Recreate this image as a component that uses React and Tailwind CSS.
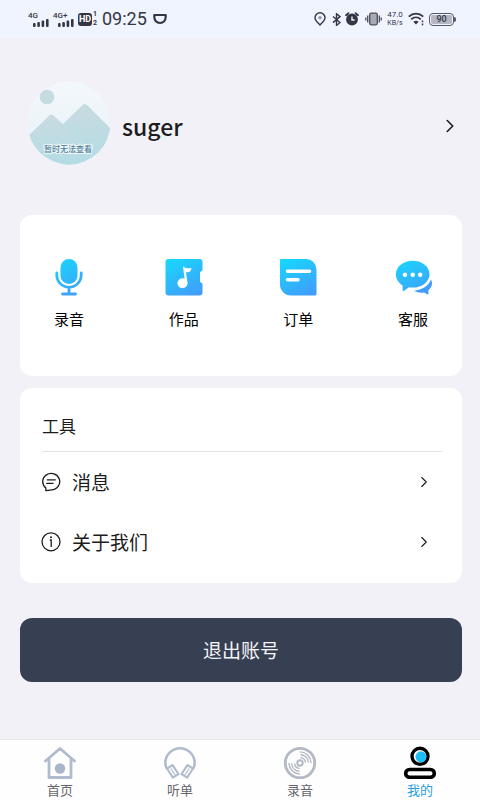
import { useState } from 'react'
import { ChevronRight } from 'lucide-react'

// --- STATUS BAR ICONS ---
const SignalIcon = ({ label, plus }) => (
  <span className="relative block w-[21px] h-4">
    <span className="absolute left-0 top-0 text-[8px] leading-[9px] font-medium">{label}{plus && '+'}</span>
    <svg className="absolute right-0 bottom-0" width="16" height="8" viewBox="0 0 16 8" fill="currentColor">
      <rect x="0" y="4" width="2.6" height="4" rx="1" />
      <rect x="4.3" y="3" width="2.6" height="5" rx="1" />
      <rect x="8.6" y="1.5" width="2.6" height="6.5" rx="1" />
      <rect x="13" y="0" width="2.6" height="8" rx="1" />
    </svg>
  </span>
)

const PinIcon = () => (
  <svg width="12" height="14" viewBox="0 0 12 14" fill="none" stroke="currentColor" strokeWidth="1.4">
    <path d="M6 13C4 11 1 8.6 1 5.8a5 5 0 0 1 10 0C11 8.6 8 11 6 13z" />
    <circle cx="6" cy="5.8" r="1.8" fill="#9a9ca8" stroke="none" />
  </svg>
)

const BluetoothIcon = () => (
  <svg width="9" height="13" viewBox="0 0 9 13" fill="none" stroke="currentColor" strokeWidth="1.4">
    <path d="M1 3.5l7 6-3.5 3V.7L8 3.6l-7 6" />
  </svg>
)

const AlarmIcon = () => (
  <svg width="14" height="14" viewBox="0 0 14 14" fill="none" stroke="currentColor">
    <circle cx="7" cy="7.5" r="5.9" fill="currentColor" stroke="none" />
    <path d="M1 3.2l2.4-2M13 3.2l-2.4-2" strokeWidth="1.8" strokeLinecap="round" />
    <path d="M7 4.5V8h2.6" stroke="#f0f2fd" strokeWidth="1.4" />
  </svg>
)

const VibrateIcon = () => (
  <svg width="17" height="14" viewBox="0 0 17 14" fill="none" stroke="#4b4d5b" strokeWidth="1.3">
    <rect x="4.7" y="1.2" width="7.6" height="11.6" rx="1.5" fill="#a7a9b4" />
    <path d="M2.7 3.5v7M14.3 3.5v7M.8 5.5v3M16.2 5.5v3" />
  </svg>
)

const WifiIcon = () => (
  <svg width="17" height="14" viewBox="0 0 17 14" fill="none" stroke="currentColor" strokeWidth="1.7">
    <path d="M.8 4.6c4.2-4 10.2-4 14.4 0M3.2 7.3c2.8-2.7 6.8-2.7 9.6 0" />
    <path d="M5.4 9.8a3.9 3.9 0 0 1 5.2 0L8 12.6z" fill="currentColor" stroke="none" />
    <path d="M14.5 8.5v1.8M14.5 11.5v1.8" strokeWidth="1.5" />
  </svg>
)

const Battery = () => (
  <span className="flex items-center">
    <span className="flex items-center justify-center w-[25px] h-[13px] rounded border border-[#55586a] p-px">
      <span className="w-full h-full rounded-[2px] bg-[#b4b6c3] text-[9px] leading-[9px] font-medium text-center">90</span>
    </span>
    <span className="w-[2px] h-[5px] rounded-r bg-[#55586a]" />
  </span>
)

// --- PROFILE ---
const Avatar = () => (
  <svg className="w-[84px] h-[84px] shrink-0" viewBox="0 0 84 84">
    <defs>
      <clipPath id="avatarClip"><circle cx="42" cy="42" r="41.5" /></clipPath>
      <linearGradient id="sky" x1="0" y1="0" x2="0" y2="1">
        <stop offset="0" stopColor="#f4f8fc" />
        <stop offset="1" stopColor="#e4f1f7" />
      </linearGradient>
      <linearGradient id="hill" x1="0" y1="0" x2="0" y2="1">
        <stop offset="0" stopColor="#c9dbe0" />
        <stop offset="1" stopColor="#b2dce5" />
      </linearGradient>
    </defs>
    <g clipPath="url(#avatarClip)">
      <rect width="84" height="84" fill="url(#sky)" />
      <circle cx="20" cy="16" r="7.3" fill="#c5dbe2" />
      <path d="M34 45L55 24.5c2-2 3.500-2 5.500 0L84 48v36H34z" fill="url(#hill)" />
      <path d="M0 56L22 35c2-2 3-2 5 0l31 28v22H0z" fill="url(#hill)" />
    </g>
    <text x="41" y="71" textAnchor="middle" fontSize="8" fontWeight="500" fill="#4f8298" stroke="#edf7fa" strokeWidth="2" paintOrder="stroke">
      暂时无法查看
    </text>
  </svg>
)

// --- SHORTCUT ICONS ---
const BlueGradient = ({ id }) => (
  <defs>
    <linearGradient id={id} gradientUnits="userSpaceOnUse" x1="10" y1="0" x2="28" y2="38">
      <stop offset="0" stopColor="#18d6fc" />
      <stop offset="1" stopColor="#419dfb" />
    </linearGradient>
  </defs>
)

const MicIcon = () => (
  <svg width="38" height="38" viewBox="0 0 38 38">
    <BlueGradient id="mic" />
    <rect x="10.5" y="1" width="17" height="25" rx="8.5" fill="url(#mic)" />
    <path d="M6.8 15v2a12.2 12.2 0 0 0 24.4 0v-2M19 29.5v6M12.5 36h13" fill="none" stroke="url(#mic)" strokeWidth="2.8" strokeLinecap="round" />
  </svg>
)

const WorksIcon = () => (
  <svg width="38" height="38" viewBox="0 0 38 38">
    <BlueGradient id="works" />
    <path d="M3.5 1h31A3 3 0 0 1 37.5 4v8c0 1.500-2.500 1-2.500 3v8c0 2 2.500 1.500 2.500 3v8.500a3 3 0 0 1-3 3h-31a3 3 0 0 1-3-3V4a3 3 0 0 1 3-3z" fill="url(#works)" />
    <circle cx="17.5" cy="25.2" r="5" fill="#fff" />
    <path d="M18 8.5c3 2 5.500 2.200 8.500 1.500-.4 3.500-2.500 4.800-5.500 4L22.500 25.500h-2.300z" fill="#fff" />
  </svg>
)

const OrderIcon = () => (
  <svg width="38" height="38" viewBox="0 0 38 38">
    <BlueGradient id="order" />
    <path d="M2 1h25a10.5 10.5 0 0 1 10.5 10.5V36a1.5 1.5 0 0 1-1.5 1.5H12A11 11 0 0 1 1 26.500V2a1 1 0 0 1 1-1z" fill="url(#order)" />
    <path d="M8.5 13.2h22M8.5 21.8h10.5" stroke="#fff" strokeWidth="3.6" strokeLinecap="round" />
  </svg>
)

const ServiceIcon = () => (
  <svg width="38" height="38" viewBox="0 0 38 38">
    <BlueGradient id="service" />
    <path d="M37 21.5c2 3.8 1 8-2.7 10.9l.2 3.2c0 .7-.6 1-1.2.7l-3.3-1.9c-3.500.6-7 .1-10-1.700C28 32 34.500 28 37 21.500z" fill="#419dfb" />
    <path d="M18.7 2.8c9.3 0 16.8 5.9 16.8 13.4s-7.5 13.4-16.8 13.4c-1.3 0-2.5-.1-3.7-.3L9.8 33c-.7.4-1.2 0-1.2-.7v-4.8C4.6 25 1.9 20.9 1.9 16.2c0-7.5 7.5-13.4 16.8-13.4z" fill="url(#service)" />
    <g fill="#fff">
      <circle cx="11" cy="16.8" r="2.2" />
      <circle cx="18.7" cy="16.8" r="2.2" />
      <circle cx="26.2" cy="16.8" r="2.2" />
    </g>
  </svg>
)

// --- TOOL ICONS ---
const MessageIcon = () => (
  <svg width="20" height="20" viewBox="0 0 20 20" fill="none" stroke="currentColor" strokeWidth="1.3" strokeLinecap="round" strokeLinejoin="round">
    <path d="M4.8 18.6L4.9 16A8.5 8.2 0 1 1 10.5 17.8C9 18.2 7 18.6 4.8 18.6z" />
    <path d="M6.3 7.8h8M5.8 11.4h6.2" />
  </svg>
)

const InfoIcon = () => (
  <svg width="20" height="20" viewBox="0 0 20 20" fill="none" stroke="currentColor" strokeWidth="1.3">
    <circle cx="10" cy="9.8" r="9" />
    <path d="M8.8 8h1.4v7" />
    <circle cx="10" cy="5.2" r="1" fill="currentColor" stroke="none" />
  </svg>
)

// --- TAB ICONS ---
const HomeIcon = () => (
  <svg width="34" height="34" viewBox="0 0 34 34" fill="none" stroke="#b0bccd" strokeWidth="2.8" strokeLinecap="round" strokeLinejoin="round">
    <path d="M2.5 15L17 2.5 31.5 15M6 13v18.5h22V13" />
    <circle cx="17" cy="22.5" r="5.2" fill="#a9b5c9" stroke="none" />
  </svg>
)

const HeadphoneIcon = () => (
  <svg width="34" height="34" viewBox="0 0 34 34" fill="none" stroke="#b0bccd" strokeWidth="2.6" strokeLinejoin="round">
    <path d="M4 23C2.8 21 2.3 19 2.3 17a14.7 14.7 0 0 1 29.4 0c0 2-.5 4-1.7 6" />
    <path d="M4 22.5l5.5-3.3 6 8.8-5.7 3.5zM30 22.5l-5.5-3.3-6 8.8 5.7 3.5z" strokeWidth="2.2" />
    <path d="M7.8 22.5l4 6M26.2 22.5l-4 6" strokeWidth="1.2" />
  </svg>
)

const DiscIcon = () => (
  <svg width="34" height="34" viewBox="0 0 34 34" fill="none" stroke="#b3bac4" strokeLinecap="round">
    <circle cx="17" cy="17" r="14.7" strokeWidth="2.8" />
    <circle cx="17" cy="17" r="2.7" strokeWidth="2" />
    <path d="M18 11.6a5.5 5.5 0 0 1 4.4 4.4M18 8.7A8.4 8.4 0 0 1 25.3 16M17.5 5.9A11.1 11.1 0 0 1 28 16.5M16 22.4a5.5 5.5 0 0 1-4.4-4.4M16 25.3A8.4 8.4 0 0 1 8.7 18M16.5 28.1A11.1 11.1 0 0 1 6 17.5" strokeWidth="1.4" />
  </svg>
)

const MineIcon = () => (
  <svg width="34" height="34" viewBox="0 0 34 34" fill="none" stroke="#000">
    <circle cx="17" cy="10.3" r="8" fill="#fff" strokeWidth="3.4" />
    <circle cx="18" cy="10.8" r="5.5" fill="#1fbdf7" stroke="none" />
    <rect x="2.7" y="23.5" width="28.6" height="7.8" rx="3.9" strokeWidth="3.6" />
  </svg>
)

const shortcuts = [
  { label: '录音', Icon: MicIcon },
  { label: '作品', Icon: WorksIcon },
  { label: '订单', Icon: OrderIcon },
  { label: '客服', Icon: ServiceIcon },
]

const tools = [
  { label: '消息', Icon: MessageIcon },
  { label: '关于我们', Icon: InfoIcon },
]

const tabs = [
  { id: 'home', label: '首页', Icon: HomeIcon },
  { id: 'list', label: '听单', Icon: HeadphoneIcon },
  { id: 'record', label: '录音', Icon: DiscIcon },
  { id: 'mine', label: '我的', Icon: MineIcon },
]

export default function App() {
  const [activeTab, setActiveTab] = useState('mine')

  return (
    <div className="min-h-screen flex flex-col bg-[#f2f1f7] text-[#1c1c20] font-['Noto_Sans_CJK_SC',sans-serif]">
      {/* Status bar */}
      <div className="flex items-center justify-between h-[38px] pl-7 pr-6 bg-[#f0f4fe] text-[#343645] font-[Roboto,sans-serif]">
        <div className="flex items-center gap-1">
          <SignalIcon label="4G" />
          <SignalIcon label="4G" plus />
          <span className="flex items-center">
            <span className="w-[14px] h-[13px] rounded-[3px] bg-[#343645] text-white text-[9px] leading-[13px] font-bold text-center">HD</span>
            <span className="flex flex-col w-[6px] text-[7px] leading-[9px] font-bold text-center">
              <span>1</span>
              <span>2</span>
            </span>
          </span>
          <span className="text-[18px] leading-5">09:25</span>
          <svg className="ml-0.5" width="14" height="12" viewBox="0 0 14 12" fill="none" stroke="currentColor" strokeWidth="2.2" strokeLinejoin="round">
            <path d="M1.3 2h11.4v1.5c0 4-2.4 6.5-5.7 6.5S1.3 7.500 1.3 3.5z" />
          </svg>
        </div>
        <div className="flex items-center gap-1">
          <span className="pr-0.5"><PinIcon /></span>
          <BluetoothIcon />
          <AlarmIcon />
          <span className="pl-0.5"><VibrateIcon /></span>
          <span className="flex flex-col w-[18px] text-center">
            <span className="text-[8px] leading-[9px]">47.0</span>
            <span className="text-[7px] leading-[9px]">KB/s</span>
          </span>
          <WifiIcon />
          <Battery />
        </div>
      </div>

      <main className="flex-1 pl-5 pr-[18px] pb-10">
        <button className="w-full flex items-center pt-[43px] pl-[7px] pr-px text-left">
          <Avatar />
          <span className="flex-1 pl-[11px] pt-1.5 text-[23px] font-medium">suger</span>
          <span className="pt-1.5"><ChevronRight size={22} strokeWidth={1.75} /></span>
        </button>

        <section className="flex justify-between mt-[50px] px-[30px] pt-[43px] pb-[46px] rounded-xl bg-white">
          {shortcuts.map(({ label, Icon }) => (
            <button key={label} className="w-[38px] flex flex-col items-center gap-3 text-[15px] leading-[22px] text-black">
              <Icon />
              {label}
            </button>
          ))}
        </section>

        <section className="mt-3 pl-[22px] pr-5 pt-[25px] pb-[11px] rounded-xl bg-white">
          <h2 className="pb-[13px] border-b border-[#e4e4e6] text-[17px] leading-[25px]">工具</h2>
          {tools.map(({ label, Icon }) => (
            <button key={label} className="w-full h-[60px] flex items-center pr-[9px] text-left text-[19px]">
              <span className="w-[31px] -ml-px"><Icon /></span>
              <span className="flex-1">{label}</span>
              <ChevronRight size={18} strokeWidth={1.5} />
            </button>
          ))}
        </section>

        <button className="w-full h-16 mt-[35px] rounded-xl bg-[#373f53] text-[#f4f5f8] text-[19px]">
          退出账号
        </button>
      </main>

      <nav className="sticky bottom-0 grid grid-cols-4 border-t border-[#e8e8ee] bg-[#fefefe]">
        {tabs.map(({ id, label, Icon }) => (
          <button
            key={id}
            onClick={() => setActiveTab(id)}
            className={`flex flex-col items-center pt-1.5 text-[13px] leading-5 ${activeTab === id ? 'text-[#2a9fe6]' : 'text-[#66666a]'}`}
          >
            <Icon />
            {label}
          </button>
        ))}
      </nav>
    </div>
  )
}
